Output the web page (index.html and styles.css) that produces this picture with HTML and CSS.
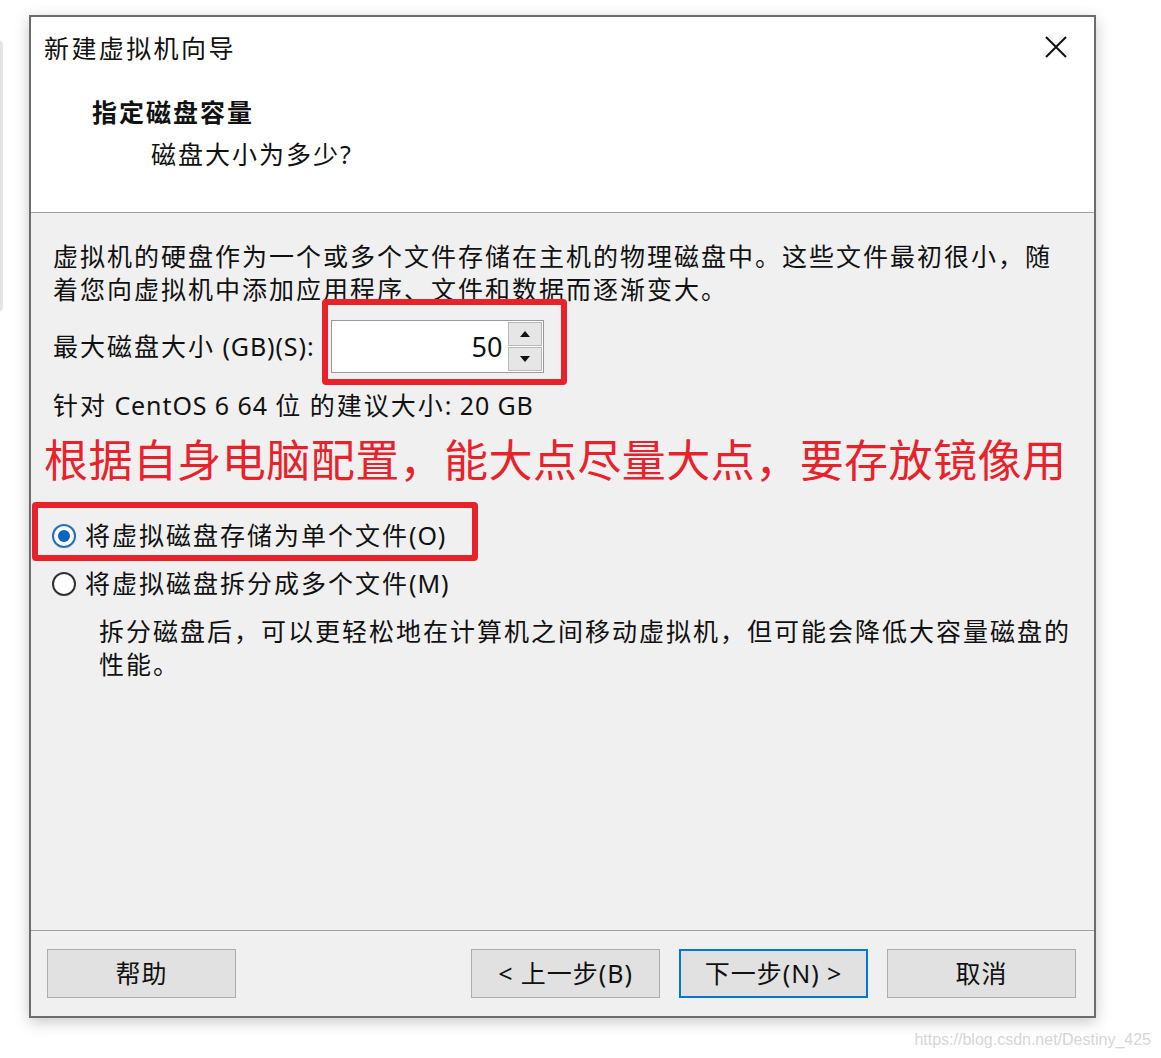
FILE: index.html
```html
<!DOCTYPE html>
<html lang="zh-CN">
<head>
<meta charset="utf-8">
<title>新建虚拟机向导</title>
<link rel="stylesheet" href="styles.css">
</head>
<body>
<div class="stage">
  <div class="bg-window"></div>
  <div class="dialog">
    <div class="header">
      <div class="title-row">
        <span class="title">新建虚拟机向导</span>
        <svg class="close" width="24" height="24" viewBox="0 0 24 24"><path d="M2 2 L22 22 M22 2 L2 22" stroke="#111" stroke-width="2" fill="none"/></svg>
      </div>
      <div class="step-title">指定磁盘容量</div>
      <div class="step-sub">磁盘大小为多少<span class="en">?</span></div>
    </div>
    <div class="body">
      <p class="para">虚拟机的硬盘作为一个或多个文件存储在主机的物理磁盘中。这些文件最初很小，随<br>着您向虚拟机中添加应用程序、文件和数据而逐渐变大。</p>
      <div class="size-row">
        <span class="label">最大磁盘大小<span class="en"> (GB)(S):</span></span>
        <div class="spin-wrap">
          <div class="spinbox">
            <div class="spin-input">50</div>
            <div class="spin-btns">
              <div class="spin-btn"><svg width="10" height="6" viewBox="0 0 10 6"><path d="M5 0 L10 6 L0 6 Z" fill="#111"/></svg></div>
              <div class="spin-btn"><svg width="10" height="6" viewBox="0 0 10 6"><path d="M0 0 L10 0 L5 6 Z" fill="#111"/></svg></div>
            </div>
          </div>
          <div class="red-box red-box-spin"></div>
        </div>
      </div>
      <div class="recommend">针对<span class="en"> CentOS 6 64 </span>位<span class="en"> </span>的建议大小<span class="en">: 20 GB</span></div>
      <div class="note">根据自身电脑配置，能大点尽量大点，要存放镜像用</div>
      <div class="radio-row radio-first">
        <span class="radio checked"><span class="dot"></span></span>
        <span class="radio-label">将虚拟磁盘存储为单个文件<span class="en">(O)</span></span>
        <div class="red-box red-box-radio"></div>
      </div>
      <div class="radio-row">
        <span class="radio"></span>
        <span class="radio-label">将虚拟磁盘拆分成多个文件<span class="en">(M)</span></span>
      </div>
      <p class="desc">拆分磁盘后，可以更轻松地在计算机之间移动虚拟机，但可能会降低大容量磁盘的<br>性能。</p>
    </div>
    <div class="footer">
      <div class="btn">帮助</div>
      <div class="btn-group">
        <div class="btn"><span class="en">&lt; </span>上一步<span class="en">(B)</span></div>
        <div class="btn default">下一步<span class="en">(N) &gt;</span></div>
        <div class="btn">取消</div>
      </div>
    </div>
  </div>
  <div class="watermark">https://blog.csdn.net/Destiny_425</div>
</div>
</body>
</html>
```

FILE: styles.css
```css
html, body {
  margin: 0;
  padding: 0;
  background: #ffffff;
}
body {
  width: 1161px;
  height: 1058px;
  overflow: hidden;
  font-family: "Noto Sans", "Noto Sans CJK SC", sans-serif;
  color: #111;
}
.en {
  letter-spacing: 0.9px;
}
.stage {
  position: relative;
  padding: 15px 0 0 29px;
}
.bg-window {
  position: absolute;
  left: -10px;
  top: 40px;
  width: 13px;
  height: 272px;
  background: #e4e4e4;
  border-radius: 5px;
}
.dialog {
  position: relative;
  width: 1067px;
  height: 1003px;
  box-sizing: border-box;
  border: 2px solid #6c6c6c;
  display: flex;
  flex-direction: column;
  box-shadow: 0 4px 14px rgba(0, 0, 0, 0.22);
  background: #f0f0f0;
}
.header {
  height: 196px;
  box-sizing: border-box;
  background: #ffffff;
  border-bottom: 1px solid #a0a0a0;
  padding: 15px 0 0 13px;
  font-size: 25px;
  line-height: 33px;
  letter-spacing: 2px;
}
.title-row {
  display: flex;
  justify-content: space-between;
  align-items: center;
  padding-right: 26px;
}
.title {
  letter-spacing: 2.4px;
}
.close {
  display: block;
  margin-top: -4px;
}
.step-title {
  margin: 31px 0 0 48px;
  font-weight: bold;
}
.step-sub {
  margin: 9px 0 0 107px;
}
.body {
  flex: 1;
  padding: 27px 0 0 22px;
  font-size: 25px;
  line-height: 33px;
  letter-spacing: 2px;
}
.para {
  margin: 0;
}
.size-row {
  display: flex;
  align-items: center;
  margin-top: 14px;
  height: 53px;
}
.label {
  margin-right: 16px;
}
.spin-wrap {
  position: relative;
}
.spinbox {
  display: flex;
  width: 213px;
  height: 53px;
  box-sizing: border-box;
  border: 1px solid #9a9a9a;
  background: #ffffff;
}
.spin-input {
  flex: 1;
  text-align: right;
  padding-right: 4px;
  font-size: 27px;
  line-height: 51px;
  letter-spacing: 0;
}
.spin-btns {
  width: 36px;
  display: flex;
  flex-direction: column;
  gap: 1px;
  padding: 1px;
  box-sizing: border-box;
}
.spin-btn {
  flex: 1;
  background: #e6e6e6;
  border: 1px solid #b8b8b8;
  display: flex;
  align-items: center;
  justify-content: center;
}
.spin-btn svg {
  display: block;
}
.red-box {
  position: absolute;
  border: 6px solid #e8222b;
  border-radius: 4px;
  pointer-events: none;
}
.red-box-spin {
  left: -9px;
  right: -23px;
  top: -21px;
  bottom: -12px;
}
.recommend {
  margin-top: 16px;
}
.note {
  margin-top: 11px;
  margin-left: -9px;
  font-family: "Noto Sans CJK SC", sans-serif;
  font-size: 44px;
  line-height: 50px;
  letter-spacing: 0.45px;
  color: #e8222b;
}
.radio-row {
  position: relative;
  display: flex;
  align-items: center;
  margin-top: 15px;
}
.radio-first {
  margin-top: 36px;
}
.radio {
  width: 24px;
  height: 24px;
  box-sizing: border-box;
  border: 2px solid #333;
  border-radius: 50%;
  background: #fff;
  margin-left: -1px;
  margin-right: 9px;
  display: flex;
  align-items: center;
  justify-content: center;
}
.radio.checked {
  border-color: #1f6fc0;
}
.dot {
  width: 12px;
  height: 12px;
  border-radius: 50%;
  background: #0a64c2;
}
.red-box-radio {
  left: -21px;
  top: -17px;
  width: 446px;
  height: 59px;
  box-sizing: border-box;
}
.desc {
  margin: 15px 0 0 46px;
}
.footer {
  height: 86px;
  box-sizing: border-box;
  border-top: 1px solid #a0a0a0;
  padding: 18px 18px 0 16px;
  display: flex;
  justify-content: space-between;
  align-items: flex-start;
}
.btn-group {
  display: flex;
  gap: 19px;
}
.btn {
  width: 189px;
  height: 49px;
  box-sizing: border-box;
  border: 1px solid #adadad;
  background: #e1e1e1;
  font-size: 25px;
  line-height: 47px;
  text-align: center;
  letter-spacing: 1px;
}
.btn.default {
  border: 2px solid #0078d7;
  line-height: 45px;
}
.watermark {
  margin-top: 13px;
  width: 1122px;
  text-align: right;
  font-family: "Liberation Sans", Arial, sans-serif;
  font-size: 16px;
  color: #d6d6d6;
}
```
